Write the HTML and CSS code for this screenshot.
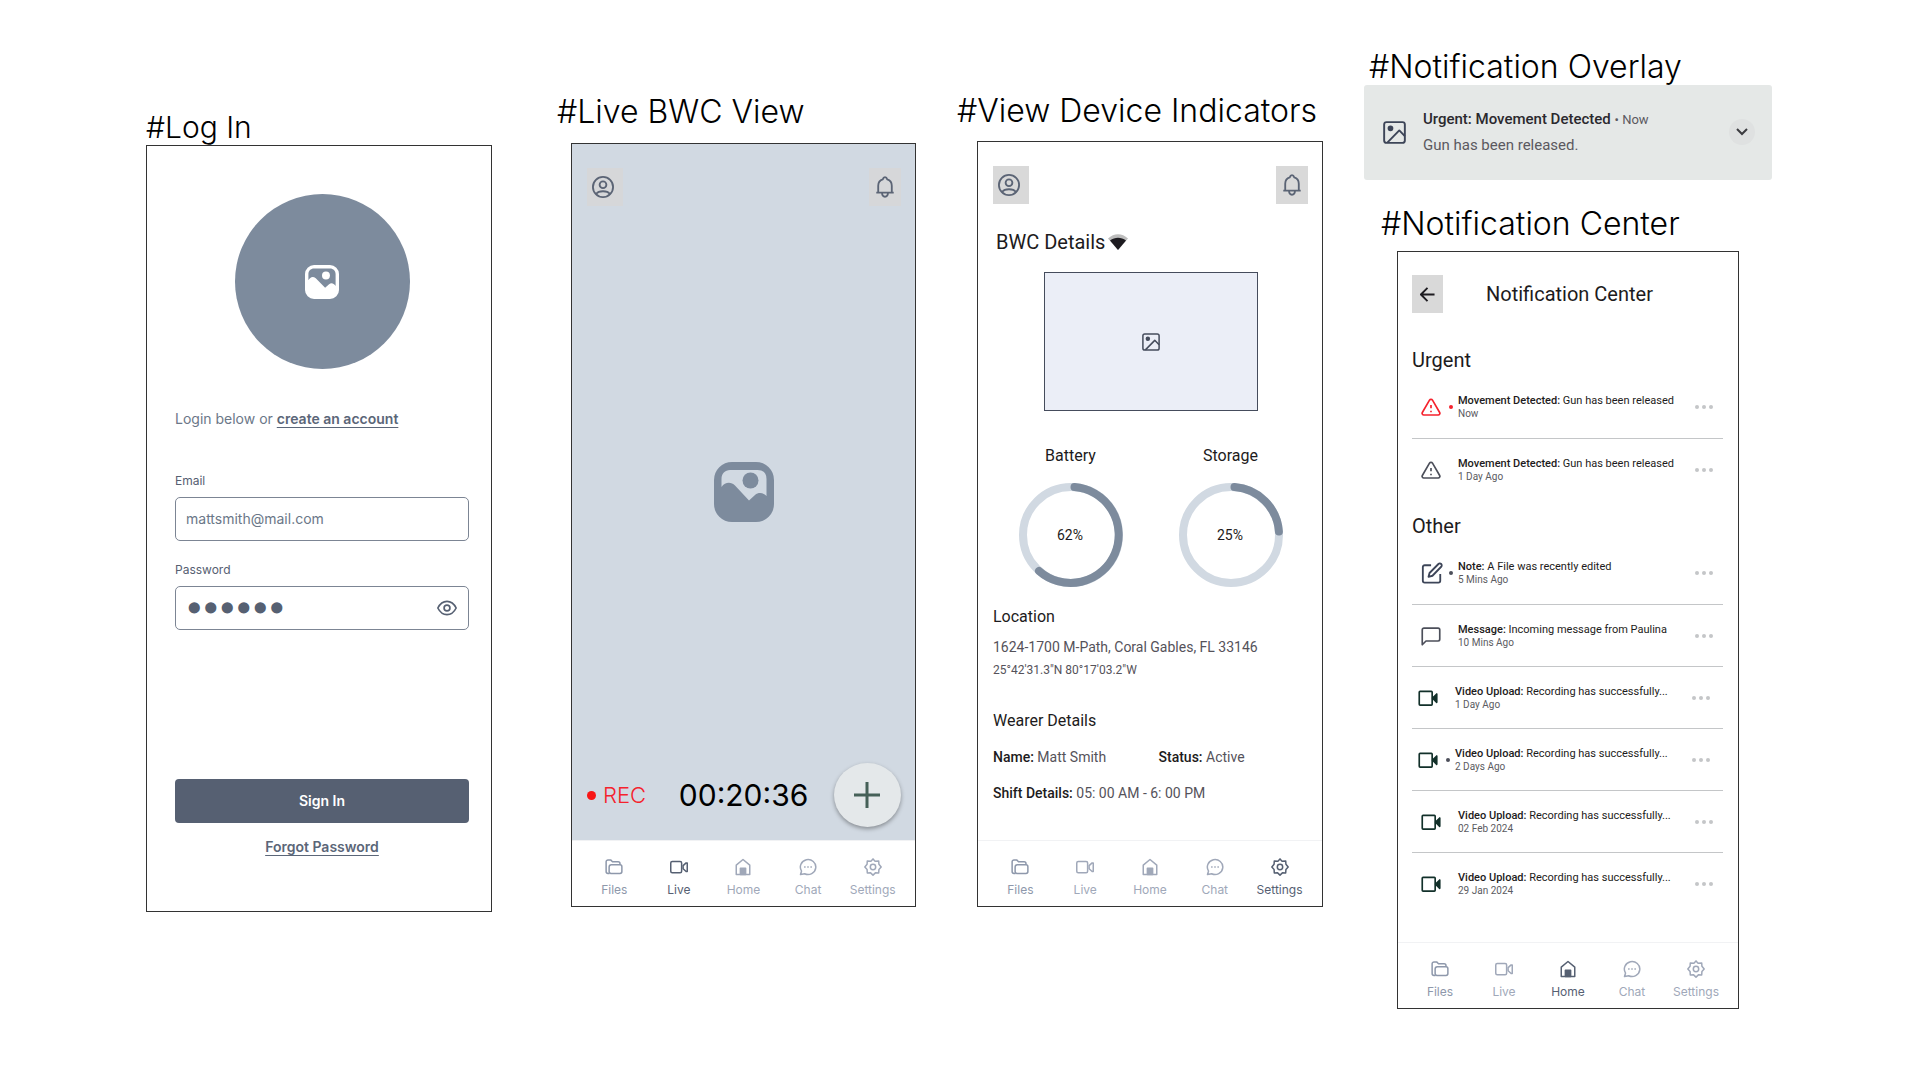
FILE: index.html
```html
<!DOCTYPE html>
<html lang="en">

<head>
    <meta charset="UTF-8">
    <meta name="viewport" content="width=device-width, initial-scale=1.0">
    <title>BWC App Wireframes</title>
    <link rel="stylesheet" href="styles.css">
</head>

<body>
    <!-- shared icons -->
    <svg class="sprite" aria-hidden="true">
        <symbol id="icon-user" viewBox="0 0 24 24">
            <circle cx="12" cy="12" r="11" />
            <circle cx="12" cy="9.5" r="3.7" />
            <path d="M4.6 19.6c1.6-2.4 4.2-3 7.4-3s5.8.6 7.4 3" />
        </symbol>
        <symbol id="icon-bell" viewBox="0 0 24 24">
            <path d="M2.5 18.2h19M4.6 18.2V10.5c0-3.3 2-6 5-6.9C10 2 10.8 1.2 12 1.2s2 .8 2.4 2.4c3 .9 5 3.6 5 6.9v7.7" />
            <path d="M8.8 18.400c0 2.600 1.300 4.200 3.200 4.200s3.200-1.600 3.200-4.200" />
        </symbol>
        <symbol id="icon-picture" viewBox="0 0 60 60">
            <path fill-rule="evenodd" d="M18 0h24a18 18 0 0 1 18 18v24a18 18 0 0 1-18 18H18A18 18 0 0 1 0 42V18A18 18 0 0 1 18 0zM7.5 25c3.5-5 9.5-5.5 13.5-1.5L35 38.5l6-5.5c3.5-3 8-2.5 11.5 1V17c0-6-3.5-9-9-9H16c-5 0-8.5 3.5-8.5 9z" />
            <circle cx="36.5" cy="18.5" r="8" />
        </symbol>
        <symbol id="icon-picture-thin" viewBox="0 0 60 60">
            <path fill-rule="evenodd" d="M16 0h28a16 16 0 0 1 16 16v28a16 16 0 0 1-16 16H16A16 16 0 0 1 0 44V16A16 16 0 0 1 16 0zM6 27c3-6 8-8 13-3.500L35.500 40l7-6c3.500-3 8-2.500 11.500 3V16c0-6-4-10-10-10H16C10 6 6 10 6 16z" />
            <circle cx="37" cy="18.500" r="7" />
        </symbol>
        <symbol id="icon-image" viewBox="0 0 24 24">
            <rect x="1.2" y="1.2" width="21.6" height="21.6" rx="2.5" />
            <circle cx="7.8" cy="7.6" r="2" fill="currentColor" />
            <path d="M4.5 22.5L17 9.800l5.800 6" />
        </symbol>
        <symbol id="icon-files" viewBox="0 0 24 24">
            <path d="M6 20.5H4a2.5 2.5 0 0 1-2.5-2.500V5A2.500 2.500 0 0 1 4 2.500h3.500l2.500 2.500h7.500a2.500 2.500 0 0 1 2.500 2.500v1.500" />
            <path d="M8.500 9h11.500a2.500 2.500 0 0 1 2.500 2.500v6.500a2.500 2.500 0 0 1-2.500 2.500H8a2.500 2.500 0 0 1-2.500-2.500v-6A3 3 0 0 1 8.500 9z" />
        </symbol>
        <symbol id="icon-live" viewBox="0 0 24 24">
            <rect x="1" y="4.500" width="14.500" height="15" rx="2" />
            <path d="M17.500 10.200l4-3.700h1.500v11.500h-1.500l-4-3.700z" />
        </symbol>
        <symbol id="icon-home" viewBox="0 0 24 24">
            <path d="M3 9.500l9-7.500 9 7.500v12.500H3z" />
            <path d="M8.500 22v-8.500h7V22z" fill="currentColor" />
        </symbol>
        <symbol id="icon-chat" viewBox="0 0 24 24">
            <path d="M2 22l1.400-4.600A10.300 10 0 1 1 7.500 21z" />
            <path d="M6.800 12h2M11 12h2M15.200 12h2" />
        </symbol>
        <symbol id="icon-settings" viewBox="0 0 24 24">
            <path d="M12 1.200l2.800 3 4.800-.3.300 4.400 3 3.700-3 3.200-.3 4.800-4.400-.2L12 22.800l-3.200-3-4.400.2-.3-4.800-3-3.200 3-3.700.3-4.400 4.800.3z" />
            <circle cx="12" cy="12" r="3.600" />
        </symbol>
        <symbol id="icon-eye" viewBox="0 0 24 24">
            <path d="M1 12C3.500 7 7.200 4 12 4s8.500 3 11 8c-2.500 5-6.200 8-11 8S3.500 17 1 12z" />
            <circle cx="12" cy="12" r="3.500" />
        </symbol>
        <symbol id="icon-alert" viewBox="0 0 24 24">
            <path d="M10.200 3.800a2.100 2.100 0 0 1 3.600 0l8.600 14.800a2 2 0 0 1-1.800 3H3.400a2 2 0 0 1-1.800-3z" />
            <path d="M12 9.500v4M12 16.500v1.800" />
        </symbol>
        <symbol id="icon-edit" viewBox="0 0 24 24">
            <path d="M11 3.500H4A2 2 0 0 0 2 5.500v15a2 2 0 0 0 2 2h15a2 2 0 0 0 2-2V13" />
            <path d="M19 2.200a2.100 2.100 0 0 1 3 3L12.500 15l-4.300 1.200L9.300 12z" />
        </symbol>
        <symbol id="icon-message" viewBox="0 0 24 24">
            <path d="M1.500 22.500V4.500a2 2 0 0 1 2-2h17a2 2 0 0 1 2 2v11.500a2 2 0 0 1-2 2H6z" />
        </symbol>
        <symbol id="icon-video" viewBox="0 0 24 24">
            <rect x="1.500" y="4" width="15.500" height="16.500" rx="1" />
            <path d="M17.500 12.200l5-5v10z" fill="currentColor" />
        </symbol>
        <symbol id="icon-more" viewBox="0 0 18 4">
            <circle cx="2" cy="2" r="2" />
            <circle cx="9" cy="2" r="2" />
            <circle cx="16" cy="2" r="2" />
        </symbol>
    </svg>

    <main class="board">
        <section class="column column-login">
            <h2 class="screen-title small">#Log In</h2>
            <form class="phone login" action="#" method="post">
                <div class="avatar">
                    <svg class="solid"><use href="#icon-picture-thin" /></svg>
                </div>
                <p class="login-text">Login below or <a href="#">create an account</a></p>
                <label for="email">Email</label>
                <div class="field">
                    <input type="email" id="email" value="mattsmith@mail.com">
                </div>
                <label for="password">Password</label>
                <div class="field">
                    <input type="password" id="password" value="secret">
                    <button type="button" class="eye" aria-label="Show password">
                        <svg class="icon"><use href="#icon-eye" /></svg>
                    </button>
                </div>
                <button type="submit" class="sign-in">Sign In</button>
                <a href="#" class="forgot">Forgot Password</a>
            </form>
        </section>

        <section class="column column-live">
            <h2 class="screen-title">#Live BWC View</h2>
            <div class="phone live">
                <div class="live-view">
                    <div class="top-bar">
                        <button type="button" class="square user" aria-label="Profile"><svg class="icon"><use href="#icon-user" /></svg></button>
                        <button type="button" class="square bell" aria-label="Notifications"><svg class="icon"><use href="#icon-bell" /></svg></button>
                    </div>
                    <svg class="solid feed"><use href="#icon-picture" /></svg>
                    <div class="recorder">
                        <span class="rec">REC</span>
                        <span class="timer">00:20:36</span>
                        <button type="button" class="add" aria-label="Add">
                            <svg viewBox="0 0 26 26"><path d="M13 0v26M0 13h26" /></svg>
                        </button>
                    </div>
                </div>
                <nav class="tabs">
                    <a href="#" class="files"><svg class="icon"><use href="#icon-files" /></svg>Files</a>
                    <a href="#" class="active"><svg class="icon"><use href="#icon-live" /></svg>Live</a>
                    <a href="#"><svg class="icon"><use href="#icon-home" /></svg>Home</a>
                    <a href="#"><svg class="icon"><use href="#icon-chat" /></svg>Chat</a>
                    <a href="#"><svg class="icon"><use href="#icon-settings" /></svg>Settings</a>
                </nav>
            </div>
        </section>

        <section class="column column-device">
            <h2 class="screen-title">#View Device Indicators</h2>
            <div class="phone device">
                <div class="device-body">
                    <div class="top-bar">
                        <button type="button" class="square user" aria-label="Profile"><svg class="icon"><use href="#icon-user" /></svg></button>
                        <button type="button" class="square bell" aria-label="Notifications"><svg class="icon"><use href="#icon-bell" /></svg></button>
                    </div>
                    <h3 class="device-title">BWC Details
                        <svg class="wifi" viewBox="0 0 20 16">
                            <path d="M0 4.500C6-1.200 14-1.200 20 4.500L10 16z" fill="#bdbdbd" />
                            <path d="M2 6.500C7 2.800 13 2.800 18 6.500L10 16z" fill="#1d1b20" />
                        </svg>
                    </h3>
                    <div class="preview"><svg class="icon"><use href="#icon-image" /></svg></div>
                    <div class="gauges">
                        <div class="gauge">
                            <h4>Battery</h4>
                            <svg viewBox="0 0 104 104">
                                <circle class="track" cx="52" cy="52" r="48" />
                                <path class="value" d="M55.500 4.100A48 48 0 1 1 20 88" />
                                <text x="51" y="57">62%</text>
                            </svg>
                        </div>
                        <div class="gauge">
                            <h4>Storage</h4>
                            <svg viewBox="0 0 104 104">
                                <circle class="track" cx="52" cy="52" r="48" />
                                <path class="value" d="M55.500 4.100A48 48 0 0 1 99.900 48.500" />
                                <text x="51" y="57">25%</text>
                            </svg>
                        </div>
                    </div>
                    <h4>Location</h4>
                    <p class="address">1624-1700 M-Path, Coral Gables, FL 33146</p>
                    <p class="coords">25°42'31.3"N 80°17'03.2"W</p>
                    <h4 class="wearer">Wearer Details</h4>
                    <div class="facts">
                        <p><b>Name:</b> Matt Smith</p>
                        <p><b>Status:</b> Active</p>
                        <p class="wide"><b>Shift Details:</b> 05: 00 AM - 6: 00 PM</p>
                    </div>
                </div>
                <nav class="tabs">
                    <a href="#" class="files"><svg class="icon"><use href="#icon-files" /></svg>Files</a>
                    <a href="#"><svg class="icon"><use href="#icon-live" /></svg>Live</a>
                    <a href="#"><svg class="icon"><use href="#icon-home" /></svg>Home</a>
                    <a href="#"><svg class="icon"><use href="#icon-chat" /></svg>Chat</a>
                    <a href="#" class="active"><svg class="icon"><use href="#icon-settings" /></svg>Settings</a>
                </nav>
            </div>
        </section>

        <section class="column column-notifications">
            <h2 class="screen-title overlay-title">#Notification Overlay</h2>
            <div class="overlay">
                <svg class="icon"><use href="#icon-image" /></svg>
                <div class="overlay-text">
                    <p><b>Urgent: Movement Detected</b> <small>• Now</small></p>
                    <p>Gun has been released.</p>
                </div>
                <button type="button" class="expand" aria-label="Expand">
                    <svg viewBox="0 0 12 8"><path d="M1 1l5 5 5-5" /></svg>
                </button>
            </div>

            <h2 class="screen-title center-title">#Notification Center</h2>
            <div class="phone center">
                <div class="center-body">
                    <header class="center-header">
                        <button type="button" class="square back" aria-label="Back">
                            <svg viewBox="0 0 16 16"><path d="M15.500 8H1.500M8 1L1 8l7 7" /></svg>
                        </button>
                        <h3>Notification Center</h3>
                    </header>

                    <h3 class="group">Urgent</h3>
                    <ul class="list">
                        <li class="unread urgent">
                            <svg class="icon"><use href="#icon-alert" /></svg>
                            <p><b>Movement Detected:</b> Gun has been released<small>Now</small></p>
                            <button type="button" class="more" aria-label="More"><svg><use href="#icon-more" /></svg></button>
                        </li>
                        <li>
                            <svg class="icon"><use href="#icon-alert" /></svg>
                            <p><b>Movement Detected:</b> Gun has been released<small>1 Day Ago</small></p>
                            <button type="button" class="more" aria-label="More"><svg><use href="#icon-more" /></svg></button>
                        </li>
                    </ul>

                    <h3 class="group">Other</h3>
                    <ul class="list">
                        <li class="unread">
                            <svg class="icon edit"><use href="#icon-edit" /></svg>
                            <p><b>Note:</b> A File was recently edited<small>5 Mins Ago</small></p>
                            <button type="button" class="more" aria-label="More"><svg><use href="#icon-more" /></svg></button>
                        </li>
                        <li>
                            <svg class="icon"><use href="#icon-message" /></svg>
                            <p><b>Message:</b> Incoming message from Paulina<small>10 Mins Ago</small></p>
                            <button type="button" class="more" aria-label="More"><svg><use href="#icon-more" /></svg></button>
                        </li>
                        <li class="recent">
                            <svg class="icon video"><use href="#icon-video" /></svg>
                            <p><b>Video Upload:</b> Recording has successfully...<small>1 Day Ago</small></p>
                            <button type="button" class="more" aria-label="More"><svg><use href="#icon-more" /></svg></button>
                        </li>
                        <li class="recent unread">
                            <svg class="icon video"><use href="#icon-video" /></svg>
                            <p><b>Video Upload:</b> Recording has successfully...<small>2 Days Ago</small></p>
                            <button type="button" class="more" aria-label="More"><svg><use href="#icon-more" /></svg></button>
                        </li>
                        <li>
                            <svg class="icon video"><use href="#icon-video" /></svg>
                            <p><b>Video Upload:</b> Recording has successfully...<small>02 Feb 2024</small></p>
                            <button type="button" class="more" aria-label="More"><svg><use href="#icon-more" /></svg></button>
                        </li>
                        <li>
                            <svg class="icon video"><use href="#icon-video" /></svg>
                            <p><b>Video Upload:</b> Recording has successfully...<small>29 Jan 2024</small></p>
                            <button type="button" class="more" aria-label="More"><svg><use href="#icon-more" /></svg></button>
                        </li>
                    </ul>
                </div>
                <nav class="tabs">
                    <a href="#" class="files"><svg class="icon"><use href="#icon-files" /></svg>Files</a>
                    <a href="#"><svg class="icon"><use href="#icon-live" /></svg>Live</a>
                    <a href="#" class="active"><svg class="icon"><use href="#icon-home" /></svg>Home</a>
                    <a href="#"><svg class="icon"><use href="#icon-chat" /></svg>Chat</a>
                    <a href="#"><svg class="icon"><use href="#icon-settings" /></svg>Settings</a>
                </nav>
            </div>
        </section>
    </main>
</body>

</html>
```
FILE: styles.css
```css
* {
    box-sizing: border-box;
}

body {
    margin: 0;
    background-color: #fff;
    font-family: Roboto, Arial, sans-serif;
    color: #1d1b20;
}

h2,
h3,
h4,
p,
ul {
    margin: 0;
    padding: 0;
}

button {
    border: none;
    padding: 0;
    background: none;
    font: inherit;
    cursor: pointer;
}

svg {
    display: block;
    flex: none;
}

b {
    font-weight: 500;
}

.sprite {
    position: absolute;
    width: 0;
    height: 0;
}

.icon {
    width: 20px;
    height: 20px;
    fill: none;
    stroke: currentColor;
    stroke-width: 2;
    stroke-linejoin: round;
    overflow: visible;
}

.solid {
    fill: currentColor;
}

/* Board */
.board {
    display: grid;
    grid-template-columns: minmax(0, 370fr) minmax(0, 359fr) minmax(0, 366fr) minmax(0, 408fr);
    column-gap: 41px;
    align-items: start;
    padding: 49px 148px 40px 146px;
}

.column-login {
    padding: 60px 24px 0 0;
}

.column-live {
    padding-top: 45px;
}

.column-device {
    padding-top: 44px;
}

.screen-title {
    font-family: Inter, sans-serif;
    font-size: 32px;
    font-weight: 300;
    line-height: 36px;
    color: #000;
    white-space: nowrap;
}

.screen-title.small {
    font-size: 30px;
}

.phone {
    display: flex;
    flex-direction: column;
    border: 1px solid #333;
    background-color: #fff;
}

/* Log in */
.login {
    padding: 48px 22px 54px 28px;
    font-family: Inter, sans-serif;
    font-size: 14px;
    line-height: 20px;
    color: #6b7788;
}

.avatar {
    display: flex;
    align-items: center;
    justify-content: center;
    align-self: center;
    width: 175px;
    height: 175px;
    border-radius: 50%;
    background-color: #7d8b9d;
    color: #fff;
}

.avatar svg {
    width: 34px;
    height: 34px;
}

.login-text {
    margin: 40px 0 23px;
}

.login a {
    color: #5b6678;
    font-weight: 600;
    text-underline-offset: 3px;
}

.login label {
    margin: 21px 0 8px;
    font-size: 12px;
    line-height: 16px;
    color: #566072;
}

.field {
    display: flex;
    align-items: center;
    height: 44px;
    padding: 0 11px 0 10px;
    border: 1px solid #7c8594;
    border-radius: 5px;
}

.field input {
    flex: 1;
    width: 100%;
    min-width: 0;
    padding: 0;
    border: none;
    outline: none;
    background: none;
    font: inherit;
    color: #6b7788;
}

.field input[type="password"] {
    height: 34px;
    font-family: "DejaVu Sans", sans-serif;
    font-size: 28px;
    color: #566072;
    -webkit-text-stroke: 3px #566072;
}

.eye {
    color: #566072;
}

.sign-in {
    height: 44px;
    margin: 149px 0 14px;
    border-radius: 4px;
    background-color: #566072;
    color: #fff;
    font-weight: 600;
}

.forgot {
    align-self: center;
}

/* Top bar */
.top-bar {
    display: flex;
    justify-content: space-between;
}

.square {
    display: flex;
    align-items: center;
    justify-content: center;
    height: 38px;
    background-color: #d9d9d9;
    color: #5b6475;
}

.square .icon {
    width: 22px;
    height: 22px;
}

.user {
    width: 36px;
    padding-right: 4px;
}

.bell {
    width: 32px;
}

/* Live view */
.live {
    margin: 13px 0 0 14px;
}

.live-view {
    display: flex;
    flex-direction: column;
    padding: 24px 14px 13px 15px;
    background-color: #d1d9e2;
}

.live-view .square {
    background-color: #d6d7d9;
}

.feed {
    align-self: center;
    width: 60px;
    height: 60px;
    margin: 256px 0 241px;
    color: #7d8b9d;
}

.recorder {
    display: flex;
    align-items: center;
    justify-content: space-between;
    font-family: Inter, sans-serif;
    font-weight: 300;
}

.rec {
    display: flex;
    align-items: center;
    gap: 7px;
    padding-right: 7px;
    font-size: 22px;
    color: #f5222d;
}

.rec::before {
    content: "";
    width: 9px;
    height: 9px;
    border-radius: 50%;
    background-color: #f81616;
}

.timer {
    font-size: 30px;
    font-weight: 400;
    color: #000;
}

.add {
    display: flex;
    align-items: center;
    justify-content: center;
    width: 67px;
    height: 64px;
    border-radius: 50%;
    background-color: #e4e8ea;
    box-shadow: 0 2px 4px rgba(0, 0, 0, 0.35);
}

.add svg {
    width: 26px;
    height: 26px;
    stroke: #456058;
    stroke-width: 3;
}

/* Bottom tabs */
.tabs {
    display: grid;
    grid-template-columns: repeat(5, 1fr);
    padding: 17px 10px 8px;
    border-top: 1px solid #f1f2f4;
    background-color: #fff;
}

.tabs a {
    display: flex;
    flex-direction: column;
    align-items: center;
    gap: 6px;
    font-family: Inter, sans-serif;
    font-size: 12px;
    line-height: 16px;
    color: #a0a8b9;
    text-decoration: none;
}

.tabs .icon {
    width: 18px;
    height: 18px;
}

.tabs .files {
    color: #8e98ab;
}

.tabs .active {
    color: #566072;
}

/* Device indicators */
.device {
    margin: 12px 0 0 20px;
}

.device-body {
    padding: 24px 14px 37px 15px;
    font-size: 14px;
    line-height: 20px;
    color: #55525a;
}

.device-title {
    display: flex;
    align-items: center;
    gap: 3px;
    margin: 26px 0 18px;
    padding-left: 3px;
    font-size: 20px;
    font-weight: 400;
    line-height: 24px;
    color: #1d1b20;
}

.wifi {
    width: 20px;
    height: 16px;
}

.preview {
    display: flex;
    align-items: center;
    justify-content: center;
    width: 214px;
    height: 139px;
    margin: 0 auto 35px;
    border: 1px solid #454c5c;
    background-color: #ebeef7;
    color: #454c5c;
}

.preview .icon {
    width: 18px;
    height: 18px;
}

.device h4 {
    font-size: 16px;
    font-weight: 400;
    line-height: 20px;
    color: #1d1b20;
}

.device b {
    color: #1d1b20;
}

.gauges {
    display: flex;
    justify-content: center;
    gap: 56px;
    margin-bottom: 20px;
}

.gauge {
    display: flex;
    flex-direction: column;
    align-items: center;
    gap: 17px;
}

.gauge svg {
    width: 104px;
    height: 104px;
    fill: none;
    stroke-width: 8;
    stroke-linecap: round;
}

.track {
    stroke: #d1d9e2;
}

.value {
    stroke: #7d8b9d;
}

.gauge text {
    fill: #1d1b20;
    font-size: 14px;
    text-anchor: middle;
}

.address {
    margin-top: 10px;
}

.coords {
    margin-top: 3px;
    font-size: 12px;
}

.device .wearer {
    margin-top: 31px;
}

.facts {
    display: grid;
    grid-template-columns: 165fr 149fr;
    row-gap: 16px;
    margin-top: 16px;
}

.facts .wide {
    grid-column: 1 / -1;
}

/* Notification overlay */
.overlay-title {
    padding-left: 5px;
}

.overlay {
    display: flex;
    align-items: center;
    padding: 24px 17px 25px 19px;
    border-radius: 3px;
    background-color: #e5e8e7;
    color: #5b595f;
}

.overlay > .icon {
    width: 23px;
    height: 23px;
    color: #3d4558;
}

.overlay-text {
    flex: 1;
    padding-left: 17px;
    font-size: 15px;
    line-height: 20px;
}

.overlay-text p + p {
    margin-top: 5px;
}

.overlay b {
    color: #2b292e;
}

.overlay small {
    font-size: 13px;
}

.expand {
    display: flex;
    align-items: center;
    justify-content: center;
    width: 26px;
    height: 26px;
    border-radius: 50%;
    background-color: #dfe1e1;
}

.expand svg {
    width: 12px;
    height: 8px;
    fill: none;
    stroke: #3c3c40;
    stroke-width: 2;
}

/* Notification center */
.center-title {
    padding: 26px 0 9px 17px;
}

.center {
    margin: 0 33px;
}

.center-body {
    padding: 23px 15px 28px 14px;
}

.center-header {
    display: flex;
    align-items: center;
    gap: 43px;
    margin-bottom: 23px;
}

.back {
    width: 31px;
}

.back svg {
    width: 15px;
    height: 15px;
    fill: none;
    stroke: #1d1b20;
    stroke-width: 2;
}

.center h3 {
    font-size: 20px;
    font-weight: 400;
    line-height: 24px;
}

.center .group {
    padding: 12px 0 4px;
}

.list + .group {
    padding-top: 14px;
}

.list {
    list-style: none;
}

.list li {
    display: flex;
    align-items: center;
    height: 62px;
    padding: 0 10px 0 9px;
    color: #4c4f5a;
}

.list li + li {
    border-top: 1px solid #c4c6c8;
}

.list .recent {
    padding: 0 13px 0 6px;
}

.list .icon.video {
    color: #12302a;
}

.list .icon.edit {
    width: 22px;
    height: 22px;
    margin-right: -2px;
    color: #3d4558;
}

.list p {
    flex: 1;
    font-size: 11px;
    line-height: 14px;
    color: #1d1b20;
    white-space: nowrap;
}

.list small {
    display: block;
    font-size: 10px;
    line-height: 12px;
    color: #5b5b5f;
}

/* unread marker sits between the icon and the text */
.list p::before {
    content: "";
    float: left;
    width: 4px;
    height: 4px;
    margin: 11px 5px 11px 8px;
    border-radius: 50%;
}

.unread p::before {
    background-color: #4c4f5a;
}

.urgent .icon {
    color: #f5222d;
}

.urgent p::before {
    background-color: #f5222d;
}

.more svg {
    width: 18px;
    height: 4px;
    fill: #c4c6c8;
}
```
